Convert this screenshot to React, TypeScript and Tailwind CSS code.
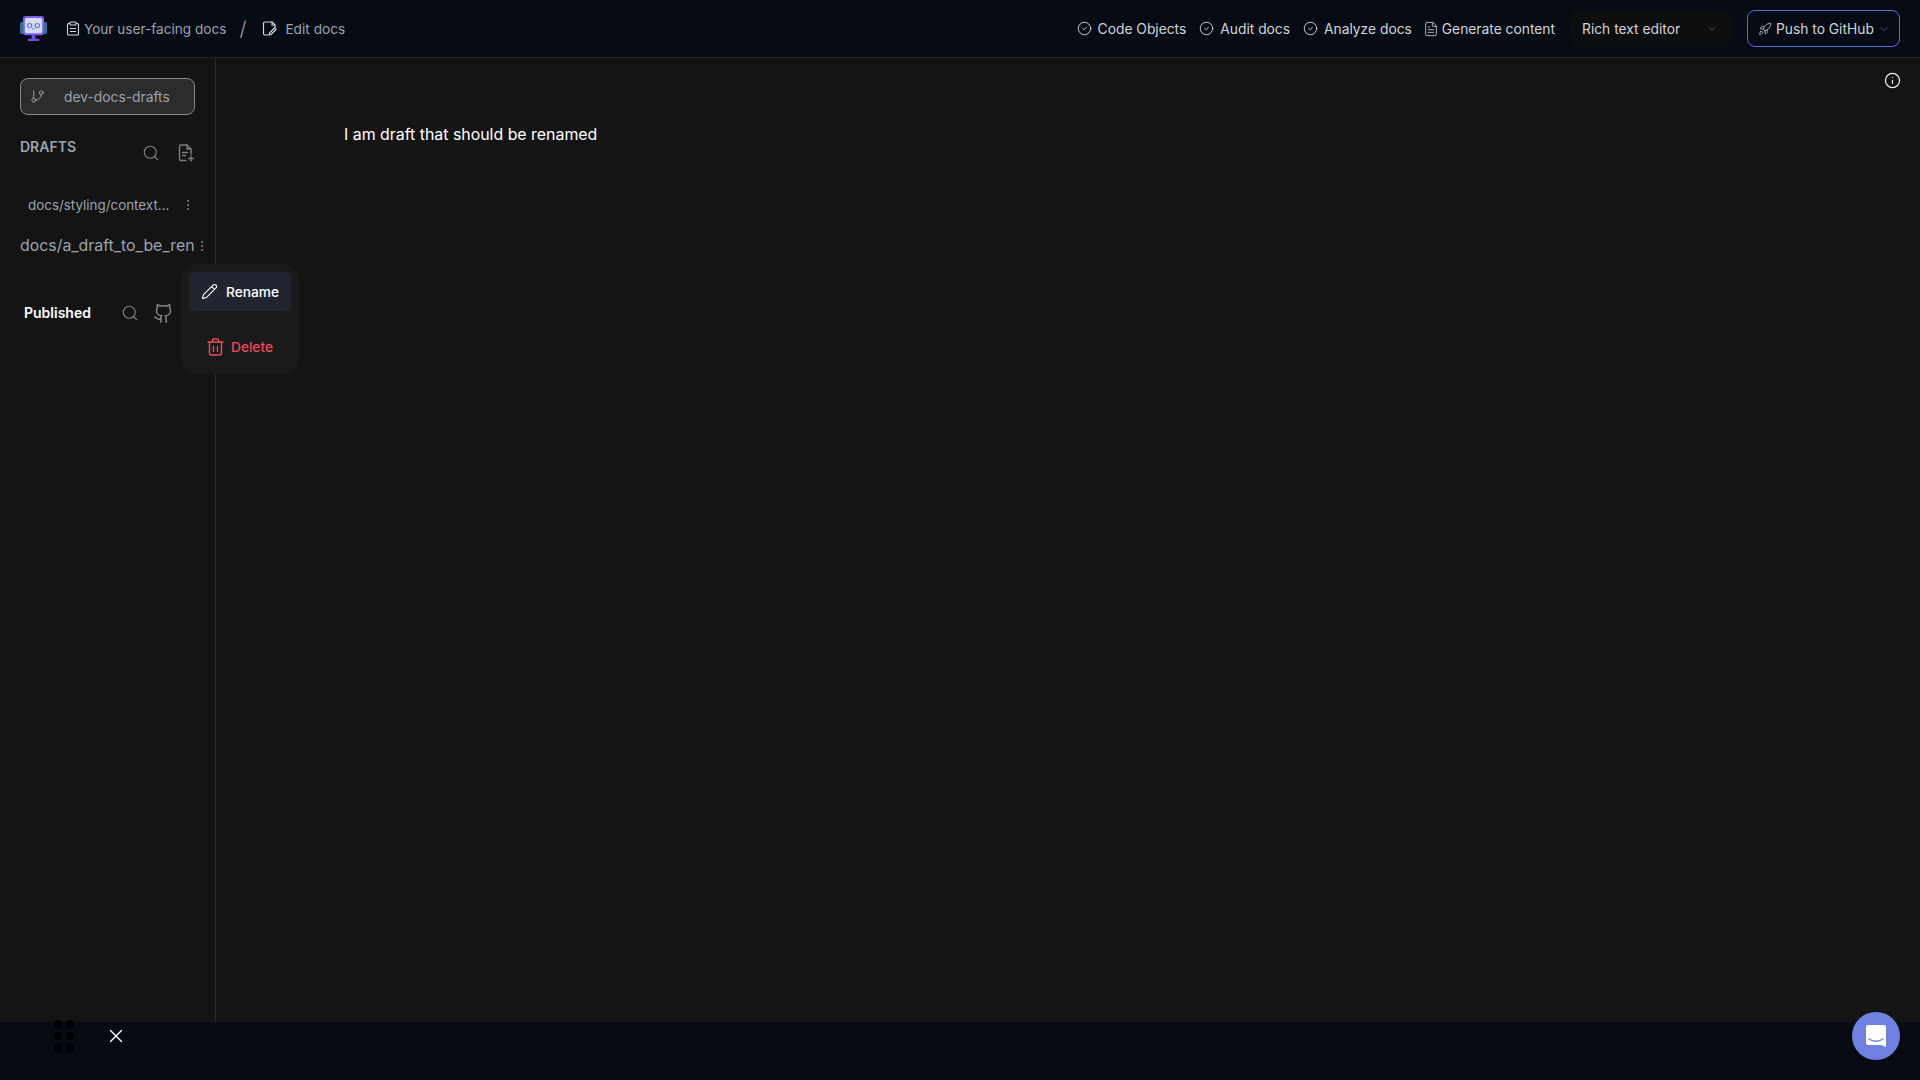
import { ChevronDown, CircleCheck, FileText, GitBranch, Github, Info, MoreVertical, Pencil, Rocket, Search, X } from "lucide-react";

const App = () => {
  return (
    <div className="relative flex h-screen w-full flex-col overflow-hidden bg-[#141414] font-['Inter',sans-serif]">
      {/* header */}
      <header className="flex h-[58px] shrink-0 items-center justify-between border-b border-[#26272b] bg-[#060b14] pl-5 pr-5">
        <div className="flex items-center">
          <svg width="27" height="27" viewBox="0 0 28 28" className="mr-[19px]">
            <rect x="0" y="7" width="4" height="13" rx="2" fill="#2f6f8f" />
            <rect x="24" y="7" width="4" height="13" rx="2" fill="#2f6f8f" />
            <rect x="3" y="1" width="22" height="20" rx="3" fill="#7c5cf6" />
            <rect x="5" y="3" width="18" height="16" rx="2" fill="#d5dcfb" />
            <circle cx="10" cy="11" r="2.2" fill="none" stroke="#6d6be8" strokeWidth="1.2" />
            <circle cx="18" cy="11" r="2.2" fill="none" stroke="#6d6be8" strokeWidth="1.2" />
            <path d="M12.5 14.5h3" stroke="#6d6be8" strokeWidth="1" />
            <rect x="12" y="21" width="4" height="4" fill="#6a55e8" />
            <rect x="8" y="24.5" width="12" height="2.5" rx="1.2" fill="#6a55e8" />
          </svg>
          <svg width="14" height="15" viewBox="0 0 14 15" fill="none" stroke="#d1d5db" strokeWidth="1.1" className="mr-[4px]">
            <path d="M4 2.5H2.5a1 1 0 0 0-1 1v9.5a1 1 0 0 0 1 1h9a1 1 0 0 0 1-1V3.500a1 1 0 0 0-1-1H10" />
            <rect x="4" y="1" width="6" height="3" rx="0.7" />
            <path d="M4 7.500h6M4 10.500h6" />
          </svg>
          <span className="text-[13.6px] leading-5 text-[#9ca3af]">Your user-facing docs</span>
          <span className="ml-[13px] mr-[16px] text-xl font-light leading-none text-[#9ca3af]">/</span>
          <svg width="16" height="16" viewBox="0 0 16 16" fill="none" stroke="#d1d5db" strokeWidth="1.2" strokeLinecap="round" strokeLinejoin="round" className="mr-[7px]">
            <path d="M6 14H3a1.500 1.500 0 0 1-1.500-1.500v-10A1.500 1.500 0 0 1 3 1h7l3 3v2.500" />
            <path d="M10 1v3h3" />
            <path d="M9 13.500l5-5-1.500-1.500-5 5-.5 2z" />
          </svg>
          <span className="text-[13.7px] leading-5 text-[#9ca3af]">Edit docs</span>
        </div>
        <div className="flex items-center text-[13.8px] leading-5 text-[#d1d5db]">
          <CircleCheck size={15} strokeWidth={1.5} className="mr-[6px]" />
          <span className="mr-[13px]">Code Objects</span>
          <CircleCheck size={15} strokeWidth={1.5} className="mr-[6px]" />
          <span className="mr-[13px]">Audit docs</span>
          <CircleCheck size={15} strokeWidth={1.5} className="mr-[6px]" />
          <span className="mr-[11px]">Analyze docs</span>
          <FileText size={16} strokeWidth={1.25} className="mr-[3px]" />
          <span>Generate content</span>
          <div className="ml-[15px] flex h-[37px] w-[162px] items-center justify-between rounded-lg bg-[#0d0e10] pl-[12px] pr-[14px]">
            <span>Rich text editor</span>
            <ChevronDown size={12} strokeWidth={1} className="text-[#8b8f96]" />
          </div>
          <button className="ml-[15px] flex h-[37px] w-[153px] items-center rounded-lg border border-[#5f6bd8] pl-[10px]">
            <Rocket size={14} strokeWidth={1.25} className="mr-[4px]" />
            <span>Push to GitHub</span>
            <ChevronDown size={12} strokeWidth={1} className="ml-[4px] text-[#8b8f96]" />
          </button>
        </div>
      </header>

      {/* body */}
      <div className="flex min-h-0 flex-1">
        <aside className="w-[216px] shrink-0 border-r border-[#2b2b2d] pl-5 pt-5">
          <div className="flex h-[37px] w-[175px] items-center rounded-lg border border-[#8a8a8a] bg-[#2c2c2c] pl-[9px]">
            <GitBranch size={15} strokeWidth={1.5} className="text-[#a1a5ab]" />
            <span className="ml-[19px] text-[13.8px] leading-5 text-[#9ca3af]">dev-docs-drafts</span>
          </div>
          <div className="mt-[22px] flex items-start">
            <span className="text-sm font-semibold text-[#9ca3af]">DRAFTS</span>
            <Search size={18} strokeWidth={1.5} className="ml-[66px] mt-[7px] text-[#7d7d7d]" />
            <svg width="18" height="18" viewBox="0 0 18 18" fill="none" stroke="#7d7d7d" strokeWidth="1.4" strokeLinecap="round" strokeLinejoin="round" className="ml-[17px] mt-[7px]">
              <path d="M9 16.500H4a1.500 1.500 0 0 1-1.500-1.500V2.500A1.500 1.500 0 0 1 4 1h6l4 4v5" />
              <path d="M10 1v4h4M5.500 8.500h5M5.500 11.500h3M14 12v5M11.500 14.500h5" />
            </svg>
          </div>
          <div className="mt-[33px] flex items-center pl-2">
            <span className="w-[142px] whitespace-nowrap text-[13.4px] leading-5 text-[#9ca3af]">docs/styling/context...</span>
            <MoreVertical size={14} strokeWidth={1.5} className="ml-[11px] text-[#8b8f96]" />
          </div>
          <div className="mt-[19px] flex items-center">
            <span className="w-[175px] whitespace-nowrap text-[15.9px] text-[#9ca3af]">docs/a_draft_to_be_ren</span>
            <MoreVertical size={14} strokeWidth={1.5} className="text-[#8b8f96]" />
          </div>
          <div className="mt-[45px] flex items-center pl-1">
            <span className="text-sm font-semibold text-white">Published</span>
            <Search size={18} strokeWidth={1.5} className="ml-[30px] text-[#7d7d7d]" />
            <Github size={21} strokeWidth={1.75} className="ml-[14px] text-[#858585]" />
          </div>
        </aside>
        <main className="relative flex-1 pl-[128px] pt-[65px]">
          <p className="text-[15.9px] font-normal text-white">I am draft that should be renamed</p>
          <Info size={17} strokeWidth={1.75} className="absolute right-[19px] top-[14px] text-[#f0f0f0]" />
        </main>
      </div>

      {/* footer */}
      <footer className="h-[58px] shrink-0 bg-[#060b14]" />

      {/* draft context menu */}
      <div className="absolute left-[181px] top-[264px] flex h-[110px] w-[118px] flex-col rounded-2xl bg-[#1a1a1a] p-2">
        <div className="flex h-[39px] items-center rounded-md bg-[#222530] pl-[12px] text-[13.7px] font-medium leading-5 text-white">
          <Pencil size={17} strokeWidth={1.5} className="mr-[8px]" />
          Rename
        </div>
        <div className="mt-[26px] flex items-center pl-[18px] text-[13.7px] font-medium leading-5 text-[#f04a5d]">
          <svg width="17" height="18" viewBox="0 0 17 18" fill="none" stroke="#f04a5d" strokeWidth="1.4" strokeLinecap="round" strokeLinejoin="round" className="mr-[7px]">
            <path d="M1 4h15M5.500 4V2a1 1 0 0 1 1-1h4a1 1 0 0 1 1 1v2" />
            <path d="M2.500 4v11a2 2 0 0 0 2 2h8a2 2 0 0 0 2-2V4" />
            <path d="M6.500 8.500v5M10.500 8.500v5" />
          </svg>
          Delete
        </div>
      </div>

      {/* drag handle */}
      <div className="absolute left-[54px] top-[1020px] grid grid-cols-2 gap-x-[4px] gap-y-[4px]">
        {[0, 1, 2, 3, 4, 5].map((i) => (
          <span key={i} className="size-[8px] rounded-full bg-black" />
        ))}
      </div>
      <X size={22} strokeWidth={1.5} className="absolute left-[105px] top-[1025px] text-white" />

      {/* chat bubble */}
      <div className="absolute left-[1852px] top-[1012px] flex size-[48px] items-center justify-center rounded-full bg-[#7080e0]">
        <svg width="22" height="24" viewBox="0 0 22 24">
          <path d="M3 1h16a2 2 0 0 1 2 2v20l-5-2H3a2 2 0 0 1-2-2V3a2 2 0 0 1 2-2z" fill="#fff" />
          <path d="M4 15c4 3 10 3 14 0" fill="none" stroke="#7080e0" strokeWidth="1.3" strokeLinecap="round" />
        </svg>
      </div>
    </div>
  );
};

export default App;
